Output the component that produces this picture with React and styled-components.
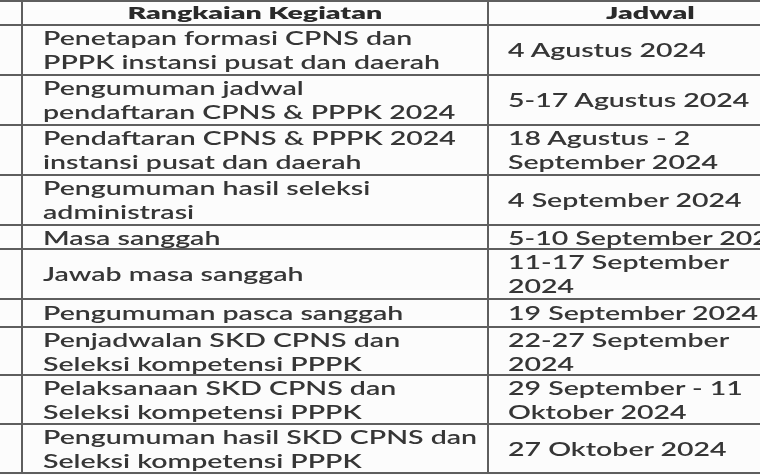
import React from "react";
import styled, { createGlobalStyle } from "styled-components";

const STRETCH = 1.5;

const GlobalStyle = createGlobalStyle`
  html, body {
    margin: 0;
    padding: 0;
    background: #ffffff;
    overflow: hidden;
  }
  body {
    font-family: Lato, "Open Sans", "Liberation Sans", sans-serif;
  }
`

const Sheet = styled.div`
  width: 814px;
  height: 475px;
  background: #fcfcfc;
  filter: blur(0.6px);
`
const Row = styled.div`
  display: grid;
  grid-template-columns: 23px 466px 325px;
  height: ${(p) => p.h}px;
  box-sizing: border-box;
  border-bottom: 2px solid #5e5e5e;
  border-top: ${(p) => (p.first ? "2px solid #5e5e5e" : "none")};
`
const Cell = styled.div`
  box-sizing: border-box;
  border-right: 2px solid #5e5e5e;
  display: flex;
  flex-direction: column;
  justify-content: center;
  align-items: ${(p) => (p.head ? "center" : "flex-start")};
  padding-left: ${(p) => (p.head ? 0 : p.pad)}px;
  white-space: nowrap;
`
const Line = styled.span`
  display: inline-block;
  font-size: 19px;
  line-height: 24px;
  font-weight: 600;
  color: #363636;
  transform: scaleX(${STRETCH});
  transform-origin: left center;
`
const HeadLine = styled.span`
  display: inline-block;
  font-size: 17px;
  line-height: 20px;
  font-weight: 800;
  color: #2a2a2a;
  transform: scaleX(1.68);
  transform-origin: center center;
`

const jadwal = [
  { h: 50, kegiatan: ["Penetapan formasi CPNS dan", "PPPK instansi pusat dan daerah"], tanggal: ["4 Agustus 2024"] },
  { h: 50, kegiatan: ["Pengumuman jadwal", "pendaftaran CPNS & PPPK 2024"], tanggal: ["5-17 Agustus 2024"] },
  { h: 50, kegiatan: ["Pendaftaran CPNS & PPPK 2024", "instansi pusat dan daerah"], tanggal: ["18 Agustus - 2", "September 2024"] },
  { h: 50, kegiatan: ["Pengumuman hasil seleksi", "administrasi"], tanggal: ["4 September 2024"] },
  { h: 24, kegiatan: ["Masa sanggah"], tanggal: ["5-10 September 2024"] },
  { h: 50, kegiatan: ["Jawab masa sanggah"], tanggal: ["11-17 September", "2024"] },
  { h: 28, kegiatan: ["Pengumuman pasca sanggah"], tanggal: ["19 September 2024"] },
  { h: 48, kegiatan: ["Penjadwalan SKD CPNS dan", "Seleksi kompetensi PPPK"], tanggal: ["22-27 September", "2024"] },
  { h: 49, kegiatan: ["Pelaksanaan SKD CPNS dan", "Seleksi kompetensi PPPK"], tanggal: ["29 September - 11", "Oktober 2024"] },
  { h: 49, kegiatan: ["Pengumuman hasil SKD CPNS dan", "Seleksi kompetensi PPPK"], tanggal: ["27 Oktober 2024"] },
];

export default function App() {
  return (
    <>
      <GlobalStyle />
      <Sheet>
        <Row h={26} first>
          <Cell head />
          <Cell head>
            <HeadLine>Rangkaian Kegiatan</HeadLine>
          </Cell>
          <Cell head>
            <HeadLine>Jadwal</HeadLine>
          </Cell>
        </Row>
        {jadwal.map((item, i) => (
          <Row key={i} h={item.h}>
            <Cell pad={0} />
            <Cell pad={20}>
              {item.kegiatan.map((t) => (
                <Line key={t}>{t}</Line>
              ))}
            </Cell>
            <Cell pad={19}>
              {item.tanggal.map((t) => (
                <Line key={t}>{t}</Line>
              ))}
            </Cell>
          </Row>
        ))}
      </Sheet>
    </>
  );
}
